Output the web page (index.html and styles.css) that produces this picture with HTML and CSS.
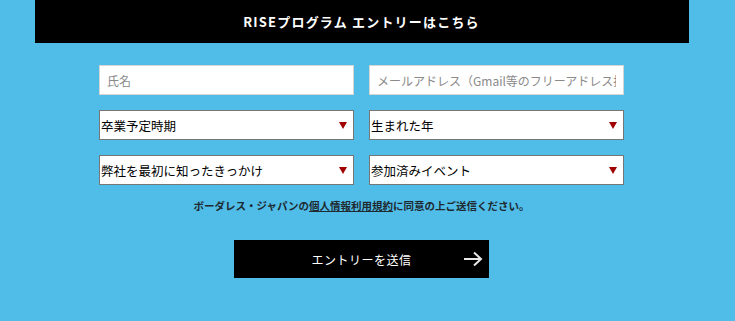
FILE: index.html
```html
<!DOCTYPE html>
<html lang="ja">
<head>
    <meta charset="UTF-8">
    <title>RISEプログラム エントリー</title>
    <link rel="stylesheet" href="styles.css">
</head>
<body>
<div class="page">
  <div class="title-bar">
    <h1>RISEプログラム エントリーはこちら</h1>
  </div>

  <form class="entry">
    <div class="fields">
      <input class="text" type="text" placeholder="氏名">
      <input class="text" type="email" placeholder="メールアドレス（Gmail等のフリーアドレス推奨）">

      <div class="select-box">
        <select>
          <option>卒業予定時期</option>
        </select>
      </div>
      <div class="select-box">
        <select>
          <option>生まれた年</option>
        </select>
      </div>

      <div class="select-box">
        <select>
          <option>弊社を最初に知ったきっかけ</option>
        </select>
      </div>
      <div class="select-box">
        <select>
          <option>参加済みイベント</option>
        </select>
      </div>
    </div>

    <p class="agree">ボーダレス・ジャパンの<a href="#">個人情報利用規約</a>に同意の上ご送信ください。</p>

    <button type="button" class="submit">
      <span>エントリーを送信</span>
      <svg class="arrow" width="20" height="16" viewBox="0 0 20 16">
        <path d="M1 8 H18 M11 1.5 L18 8 L11 14.5" fill="none" stroke="#e8e8e8" stroke-width="2"/>
      </svg>
    </button>
  </form>
</div>
</body>
</html>
```

FILE: styles.css
```css
  body {
    margin: 0;
    background-color: #50bce8;
    font-family: "Noto Sans CJK JP", "Noto Sans", sans-serif;
  }

  .page {
    width: 654px;
    margin-left: 35px;
  }

  .title-bar {
    background-color: #000;
    height: 43px;
    display: flex;
    align-items: center;
    justify-content: center;
  }

  .title-bar h1 {
    margin: 0 0 0 -1px;
    color: #fff;
    font-size: 13px;
    font-weight: bold;
    letter-spacing: 1.2px;
  }

  .entry {
    width: 525px;
    margin: 22px 0 0 64px;
    display: flex;
    flex-direction: column;
    align-items: center;
  }

  .fields {
    width: 100%;
    display: grid;
    grid-template-columns: 255px 255px;
    column-gap: 15px;
    row-gap: 15px;
  }

  .text {
    box-sizing: border-box;
    height: 30px;
    border: 1px solid #d4d4d4;
    background: #fff;
    padding: 0 7px;
    font-family: inherit;
    font-size: 12px;
    outline: none;
  }

  .text::placeholder {
    color: #8a8a8a;
  }

  .select-box {
    position: relative;
    height: 30px;
  }

  .select-box select {
    appearance: none;
    -webkit-appearance: none;
    box-sizing: border-box;
    width: 100%;
    height: 100%;
    border: 1px solid #767676;
    border-radius: 0;
    background: #fff;
    padding: 0 0 0 1px;
    font-family: inherit;
    font-size: 12.5px;
    color: #000;
  }

  .select-box::after {
    content: "";
    position: absolute;
    right: 7px;
    top: 12px;
    border-left: 4px solid transparent;
    border-right: 4px solid transparent;
    border-top: 7px solid #a00000;
    pointer-events: none;
  }

  .agree {
    margin: 13px 0 0;
    font-size: 10.5px;
    line-height: 16px;
    font-weight: bold;
    color: #1e2a30;
  }

  .agree a {
    color: #1e2a30;
    text-decoration: underline;
  }

  .submit {
    position: relative;
    margin-top: 26px;
    width: 255px;
    height: 38px;
    border: none;
    background: #000;
    color: #fff;
    font-family: inherit;
    font-size: 12px;
    letter-spacing: 0.5px;
  }

  .arrow {
    position: absolute;
    right: 6px;
    top: 11px;
  }
```
